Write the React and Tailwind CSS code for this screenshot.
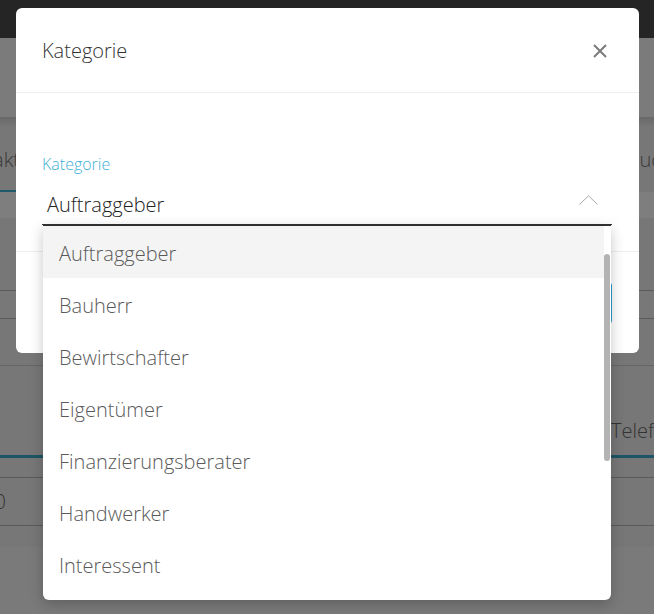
import React from 'react';

const options = [
  'Auftraggeber',
  'Bauherr',
  'Bewirtschafter',
  'Eigentümer',
  'Finanzierungsberater',
  'Handwerker',
  'Interessent',
];

const CloseIcon = () => (
  <svg width="14" height="14" viewBox="0 0 14 14" fill="none">
    <path d="M1 1L13 13M13 1L1 13" stroke="#7a7a7a" strokeWidth="2" />
  </svg>
);

const ChevronUp = () => (
  <svg width="19" height="10" viewBox="0 0 19 10" fill="none">
    <path d="M0.5 9.5L9.5 0.8L18.5 9.5" stroke="#a8a8a8" strokeWidth="1" />
  </svg>
);

// dimmed page that sits behind the dialog
const Backdrop = () => (
  <div className="flex flex-col h-full">
    <div className="h-[38px] bg-[#252525]" />
    <div className="h-[79px] bg-[#7b7b7b]" />
    <div className="h-[10px] bg-gradient-to-b from-[#696969] to-[#777777]" />
    <div className="h-[63px] flex items-center justify-between pt-[2px] bg-[#777777]">
      <div className="w-[20px] flex justify-end whitespace-nowrap text-[20px] font-light text-[#3a3a3a]">Kontakt</div>
      <div className="w-[27px] whitespace-nowrap overflow-hidden text-[20px] font-light text-[#3a3a3a]">Buchungen</div>
    </div>
    <div className="h-[2px] flex">
      <div className="w-[40px] bg-[#1f5a6b]" />
      <div className="flex-1 bg-[#777777]" />
    </div>
    <div className="h-[26px] bg-[#7e7e7e]" />
    <div className="h-[72px] bg-[#777777]" />
    <div className="h-px bg-[#5a5a5a]" />
    <div className="h-[27px] bg-[#787878]" />
    <div className="h-px bg-[#5a5a5a]" />
    <div className="h-[46px] bg-[#777777]" />
    <div className="h-px bg-[#666666]" />
    <div className="h-[89px] flex items-end justify-end pb-[9px] bg-[#777777]">
      <div className="w-[43px] whitespace-nowrap overflow-hidden text-[20px] font-light text-[#333]">Telefon</div>
    </div>
    <div className="h-[3px] bg-[#1d5566]" />
    <div className="h-[19px] bg-[#777777]" />
    <div className="h-px bg-[#5a5a5a]" />
    <div className="h-[47px] flex items-center bg-[#777777]">
      <div className="w-[6px] flex justify-end whitespace-nowrap text-[20px] font-light text-[#333]">100</div>
    </div>
    <div className="h-px bg-[#5a5a5a]" />
    <div className="h-[21px] bg-[#777777]" />
    <div className="flex-1 bg-[#7a7a7a]" />
  </div>
);

export default function App() {
  return (
    <div className="relative w-[654px] h-[614px] overflow-hidden bg-[#777777] font-['Open_Sans',sans-serif]">
      <Backdrop />

      {/* dialog */}
      <div className="absolute left-[16px] top-[8px] w-[623px] h-[345px] bg-white rounded-md flex flex-col">
        <div className="h-[85px] flex items-center justify-between pl-[26px] pr-[32px] pt-[2px] border-b border-[#eeeeee]">
          <span className="text-[20px] font-light text-[#333]">Kategorie</span>
          <CloseIcon />
        </div>
        <div className="pt-[61px] pb-[26px] pl-[26px] pr-[27px]">
          <div className="text-[16px] leading-[20px] font-light text-[#3fb0d4]">Kategorie</div>
          <div className="mt-[16px] h-[35px] flex items-start justify-between pl-[5px] pr-[14px] border-b border-[#333]">
            <span className="pt-[1px] text-[20px] leading-[28px] font-light text-[#222]">Auftraggeber</span>
            <div className="pt-[5px]"><ChevronUp /></div>
          </div>
        </div>
        <div className="flex-1 flex justify-end items-start pt-[30px] pr-[27px] border-t border-[#eeeeee]">
          <div className="w-[120px] h-[42px] rounded bg-[#2d9cd0]" />
        </div>
      </div>

      {/* open select list */}
      <div className="absolute left-[43px] top-[225px] w-[568px] h-[375px] bg-white border-t border-[#2f2f2f] rounded-b-md shadow-[0_4px_14px_rgba(0,0,0,0.22)] overflow-hidden">
        <div className="pr-[7px]">
          {options.map((opt, i) => (
            <div
              key={opt}
              className={`h-[52px] flex items-center pl-[16px] pt-[4px] text-[20px] font-light text-[#5a5a5a] ${i === 0 ? 'bg-[#f4f4f4]' : ''}`}
            >
              {opt}
            </div>
          ))}
        </div>
        <div className="absolute right-px top-[28px] w-[6px] h-[207px] rounded-full bg-[#b3b3b3]" />
      </div>
    </div>
  );
}
